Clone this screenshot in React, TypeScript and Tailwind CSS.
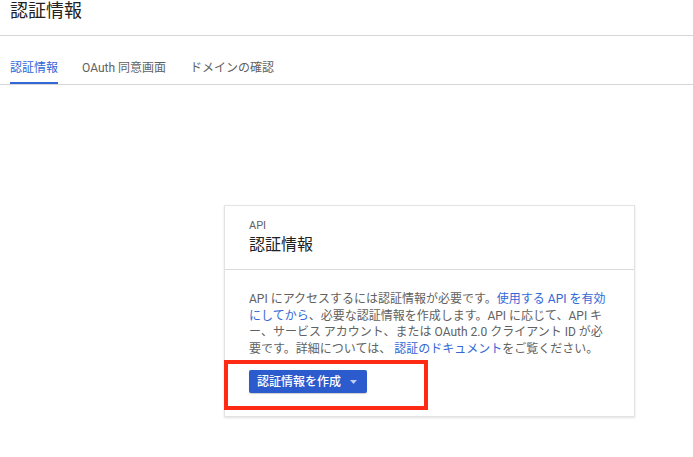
import React from 'react';

const tabs = [
  { id: 'credentials', label: '認証情報', active: true },
  { id: 'consent', label: 'OAuth 同意画面', active: false },
  { id: 'domain', label: 'ドメインの確認', active: false },
];

const App: React.FC = () => {
  return (
    <div
      className="min-h-screen w-full bg-white text-[#212121]"
      style={{ fontFamily: "Roboto, 'Noto Sans CJK JP', sans-serif" }}
    >
      {/* Page title */}
      <div className="h-[36px] border-b border-[#d6d6d6] pl-[10px]">
        <h1 className="text-[18px] leading-[22px] font-normal text-[#212121]">認証情報</h1>
      </div>

      {/* Tabs */}
      <nav className="flex gap-[24px] border-b border-[#d6d6d6] pl-[10px] pt-[24px]">
        {tabs.map(tab => (
          <button
            key={tab.id}
            className={`border-b-2 pb-[6px] text-[12px] leading-[16px] ${
              tab.active ? 'border-[#3367d6] text-[#3367d6]' : 'border-transparent text-[#616161]'
            }`}
          >
            {tab.label}
          </button>
        ))}
      </nav>

      {/* Empty state card */}
      <div className="pl-[224px] pt-[120px]">
        <div className="relative w-[411px] border border-[#e3e3e3] bg-white shadow-[0_1px_2px_rgba(0,0,0,0.12)]">
          <div className="h-[64px] border-b border-[#dadada] px-[24px] pt-[13px]">
            <div className="text-[11px] leading-[14px] text-[#616161]">API</div>
            <div className="mt-[1px] text-[16px] leading-[22px] text-[#212121]">認証情報</div>
          </div>

          <div className="px-[24px] pb-[23px] pt-[21px]">
            <p className="whitespace-nowrap text-[12px] leading-[16.5px] text-[#616161]">
              API にアクセスするには認証情報が必要です。<a className="text-[#3367d6]">使用する API を有効</a>
              <br />
              <a className="text-[#3367d6]">にしてから</a>、必要な認証情報を作成します。API に応じて、API キ
              <br />
              ー、サービス アカウント、または OAuth 2.0 クライアント ID が必
              <br />
              要です。詳細については、 <a className="text-[#3367d6]">認証のドキュメント</a>をご覧ください。
            </p>

            <button className="mt-[13px] inline-flex h-[23px] items-center gap-[9px] rounded-[2px] bg-[#2b5bcd] pl-[8px] pr-[10px] text-[12px] font-medium text-white shadow-[0_1px_1px_rgba(0,0,0,0.2)]">
              認証情報を作成
              <svg width="7" height="4" viewBox="0 0 7 4" className="opacity-70">
                <path d="M0 0h7L3.5 4z" fill="white" />
              </svg>
            </button>
          </div>

          {/* Highlight box */}
          <div className="absolute left-[-1px] top-[154px] h-[50px] w-[204px] border-4 border-[#ff2a14]" />
        </div>
      </div>
    </div>
  );
};

export default App;
